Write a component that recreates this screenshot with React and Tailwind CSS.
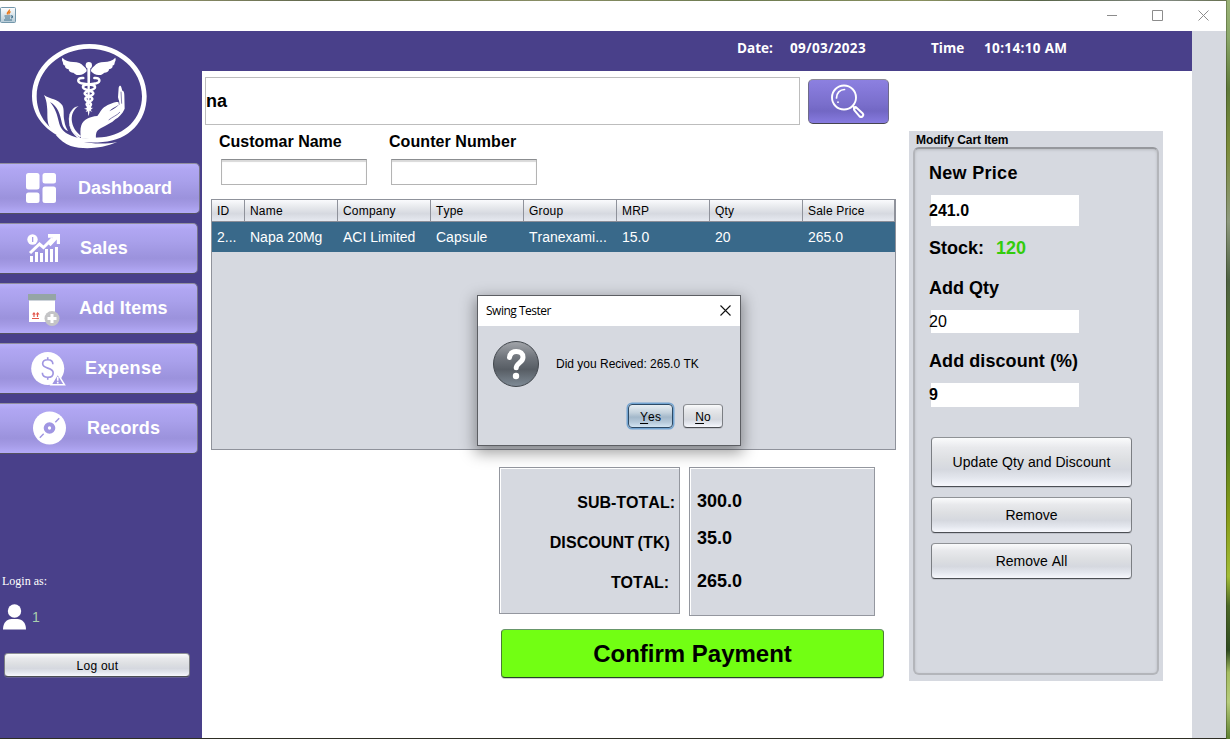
import React from "react";

const grayBtn =
  "flex items-center justify-center rounded-[4px] border border-t-[#8f9296] border-x-[#7b7e83] border-b-[#4c4f54] bg-[linear-gradient(180deg,#fafbfc_0%,#e8e9ec_20%,#dddfe2_45%,#d5d8df_66%,#e4e7ee_84%,#f7f8fd_100%)] shadow-[0_1px_0_rgba(150,153,160,0.35)]";

function Logo() {
  return (
    <svg viewBox="0 6 360 330" className="h-[110px] w-[120px]" fill="#fff">
      <path
        fillRule="evenodd"
        d="M178 12C274 12 350 82 350 169C350 244 296 302 218 306C190 309 160 307 134 304C60 290 6 236 6 169C6 82 83 12 178 12ZM178 26C91 26 20 90 20 169C20 222 50 264 96 286C124 297 152 298 178 294L216 292C286 286 336 234 336 169C336 90 265 26 178 26Z"
      />
      <path d="M92 278C130 305 200 318 262 306C214 326 164 330 122 318C104 312 90 300 78 286Z" />
      <path d="M42 165C60 178 84 176 97 196C104 210 99 226 103 242C105 256 109 264 114 273C104 270 98 260 95 246C90 222 84 200 60 186C77 206 82 226 86 244C90 262 98 274 112 281C128 290 146 294 166 296L160 306C118 304 82 290 62 266C48 246 54 222 51 200C50 184 47 176 42 165Z" />
      <path d="M142 198C122 208 115 224 117 243C119 268 136 286 162 300L150 298C126 284 116 262 117 240C118 218 128 202 142 198Z" />
      <path d="M146 198C128 210 123 228 126 246C130 266 140 278 154 288L150 292C128 280 116 262 117 238C118 216 128 202 146 198Z" />
      <path d="M153 296C151 282 150 268 154 256C160 238 178 230 202 228C210 218 214 208 222 202C236 192 254 186 264 186C272 187 272 191 264 196C254 202 244 206 238 214C250 208 262 200 269 192L264 172L266 143C268 136 272 136 274 142L277 152C281 152 283 158 283 166L284 206C277 222 266 232 256 238C246 248 230 256 212 265C198 272 197 282 198 296Z" />
      <path d="M236 240C248 230 262 226 270 216M265 180L268 194M273 155l2 36" fill="none" stroke="#49408a" strokeWidth="2" />
      <circle cx="176.500" cy="75.500" r="9.500" />
      <path d="M172 82h9l-3 126-2 20-3-20z" />
      <path d="M170 94C164 101 156 105 148 105C138 106 134 101 130 98C121 99 116 93 116 88C108 86 103 81 106 77C98 75 100 70 98 65C95 61 96 57 97 53C105 62 118 66 130 66C144 66 154 70 160 78C166 84 171 86 170 94Z" />
      <path d="M183 94C189 101 197 105 205 105C215 106 219 101 223 98C232 99 237 93 237 88C245 86 250 81 247 77C255 75 253 70 255 65C258 61 257 57 256 53C248 62 235 66 223 66C209 66 199 70 193 78C187 84 182 86 183 94Z" />
      <g fill="none" stroke="#fff" strokeWidth="7.500" strokeLinecap="round">
        <path d="M160 114C142 112 140 127 154 130C176 134 196 132 195 142C194 152 166 151 164 160C164 170 188 168 187 177C186 186 168 186 170 194C172 201 182 199 181 206" />
        <path d="M193 114C211 112 213 127 199 130C177 134 157 132 159 142C161 152 190 151 190 160C189 170 165 168 166 177C167 186 184 186 183 194C182 201 172 199 173 206" />
      </g>
      <path d="M162 206l11-3 5 2 12-2-9 6 6 6-10-3-10 4 4-7zM173 214h6l-3 14z" />
    </svg>
  );
}

function DashboardIcon() {
  return (
    <svg viewBox="0 0 30 30" className="h-[30px] w-[30px]" fill="#fff">
      <rect width="13.500" height="16.500" rx="2.500" />
      <rect x="16.500" width="13.500" height="10.500" rx="2.500" />
      <rect y="19.500" width="13.500" height="10.500" rx="2.500" />
      <rect x="16.500" y="13.500" width="13.500" height="16.500" rx="2.500" />
    </svg>
  );
}

function SalesIcon() {
  return (
    <svg viewBox="0 0 34 30" className="h-[30px] w-[34px]" fill="#fff">
      <circle cx="5.500" cy="6.500" r="5.200" />
      <path d="M5 4h1.300v5h-1.300z" fill="#a49be6" />
      <path d="M3 20L12.500 11l4 3.500L25.500 5.500" fill="none" stroke="#fff" strokeWidth="3" />
      <path d="M21 1h12v10h-3.200V6.500l-6.300 6.800-3-3 5.300-5.500H21z" />
      <path d="M3 23h3v6H3zM8 19h3v10H8zM13 20h3v9h-3zM18 16h3v13h-3zM23 16h3v13h-3zM28 14h3v15h-3z" />
    </svg>
  );
}

function AddItemsIcon() {
  return (
    <svg viewBox="0 0 34 32" className="h-[32px] w-[34px]">
      <path d="M2 6h26v22H2z" fill="#fff" />
      <path d="M1 0h28v6H1z" fill="#95a5a5" />
      <path d="M2 6h26v1H2z" fill="#cdd3da" />
      <path d="M5 24.500h7M7 23v-4M10.500 23v-4" stroke="#e2574c" strokeWidth="1.200" />
      <path d="M5 20.500l2-2.500 1.800 2.500zM8.800 20.500l1.800-2.500 2 2.500z" fill="#e2574c" />
      <circle cx="25" cy="24.500" r="7.500" fill="#c4c4c6" />
      <path d="M25 20v9M20.500 24.500h9" stroke="#fff" strokeWidth="3" />
    </svg>
  );
}

function ExpenseIcon() {
  return (
    <svg viewBox="0 0 36 36" className="h-[36px] w-[36px]">
      <circle cx="17.200" cy="17.500" r="17" fill="#fff" />
      <path
        d="M22.500 13c0-3-2.200-4.500-5.300-4.500-3 0-5.200 1.500-5.200 4.200 0 5.700 10.800 3 10.800 9.300 0 2.900-2.300 4.500-5.500 4.500-3.400 0-5.600-1.800-5.600-4.700M17.200 6v2.500M17.200 26.500v2.500"
        fill="none"
        stroke="#a096e2"
        strokeWidth="1.700"
      />
      <path d="M27.500 23L20.500 34.300h14z" fill="#a096e2" stroke="#fff" strokeWidth="1.500" />
      <path d="M27.500 26v4.200M27.500 31.200v1.800" stroke="#fff" strokeWidth="1.700" />
    </svg>
  );
}

function RecordsIcon() {
  return (
    <svg viewBox="0 0 34 34" className="h-[34px] w-[34px]">
      <circle cx="17" cy="17" r="17" fill="#fff" />
      <circle cx="17" cy="17" r="6" fill="#a096e2" />
      <circle cx="17" cy="17" r="1.700" fill="#fff" />
      <path d="M7 27l4-4M23 11l4-4" stroke="#a096e2" strokeWidth="1.500" />
    </svg>
  );
}

function NavButton({ icon, label, box, iconPad, textPad }) {
  return (
    <button
      className={
        "flex h-[51px] shrink-0 items-center rounded-r-[5px] border border-l-0 border-t-[#918f9f] border-r-[#77748a] border-b-[#55535f] bg-[linear-gradient(180deg,#b8affa_0%,#b0a6f2_12%,#a9a0eb_35%,#9b92dc_70%,#a59be6_84%,#b4abf8_100%)] pb-px " +
        box
      }
    >
      <span className={"flex w-[66px] shrink-0 " + iconPad}>{icon}</span>
      <span className={"text-lg leading-none font-bold text-white " + textPad}>{label}</span>
    </button>
  );
}

function Sidebar() {
  return (
    <aside className="flex w-[202px] shrink-0 flex-col bg-[#49408a]">
      <div className="h-[132px] shrink-0 pt-[11px] pl-[30px]">
        <Logo />
      </div>
      <nav className="flex flex-col gap-[9px]">
        <NavButton icon={<DashboardIcon />} label="Dashboard" box="w-[200px]" iconPad="pl-[26px]" textPad="pl-[12px]" />
        <NavButton icon={<SalesIcon />} label="Sales" box="w-[198px]" iconPad="pl-[27px]" textPad="pl-[14px] tracking-[0.15px]" />
        <NavButton icon={<AddItemsIcon />} label="Add Items" box="w-[198px]" iconPad="pl-[27px] pt-[3px]" textPad="pl-[13px] tracking-[0.2px]" />
        <NavButton icon={<ExpenseIcon />} label="Expense" box="w-[198px]" iconPad="pl-[31px] pt-[2px]" textPad="pl-[19px] tracking-[0.4px]" />
        <NavButton icon={<RecordsIcon />} label="Records" box="w-[198px]" iconPad="pl-[33px]" textPad="pl-[21px] tracking-[0.15px]" />
      </nav>
      <div className="mt-[119px] pl-[2px] font-['Liberation_Serif',serif] text-[12px] leading-[16px] text-white">Login as:</div>
      <div className="mt-[14px] flex h-[27px] items-center gap-[7px] pl-[3px]">
        <svg viewBox="0 0 23 26" className="h-[26px] w-[23px]" fill="#fff">
          <circle cx="11.500" cy="7" r="6.700" />
          <path d="M0 25.500C0 18.500 4 15 8.500 15h6c4.500 0 8.500 3.500 8.500 10.500z" />
        </svg>
        <span className="-ml-px text-[14px] leading-none text-[#a9cfae]">1</span>
      </div>
      <button className={"mt-[23px] ml-[4px] h-[24px] w-[186px] pt-[2px] pl-px text-[12px] tracking-[0.25px] text-black " + grayBtn}>Log out</button>
    </aside>
  );
}

const columns = [
  ["ID", "2...", "w-[33px]"],
  ["Name", "Napa 20Mg", "w-[93px]"],
  ["Company", "ACI Limited", "w-[93px]"],
  ["Type", "Capsule", "w-[93px]"],
  ["Group", "Tranexami...", "w-[93px]"],
  ["MRP", "15.0", "w-[93px]"],
  ["Qty", "20", "w-[93px]"],
  ["Sale Price", "265.0", "w-[92px]"],
];

function CartTable() {
  return (
    <div className="mt-[14px] ml-[9px] h-[251px] w-[685px] border border-[#8f929b] bg-[#d6d9e0]">
      <div className="flex h-[22px] border-b border-[#8b8e98] bg-[linear-gradient(180deg,#fafbfd_0%,#e6e8ec_35%,#d6d9e0_65%,#e6e9f0_100%)]">
        {columns.map(([head, , w]) => (
          <div key={head} className={"flex shrink-0 items-center border-r border-[#8f929b] pl-[5px] text-[12px] leading-none tracking-[0.2px] text-black " + w}>
            {head}
          </div>
        ))}
      </div>
      <div className="flex h-[30px] bg-[#39698a]">
        {columns.map(([head, value, w]) => (
          <div key={head} className={"flex shrink-0 items-center pl-[5px] text-sm leading-none whitespace-nowrap text-white " + w}>
            {value}
          </div>
        ))}
      </div>
    </div>
  );
}

function CheckoutArea() {
  return (
    <section className="flex w-[707px] shrink-0 flex-col">
      <div className="flex gap-[8px] pt-[6px] pl-[3px]">
        <div className="flex h-[48px] w-[595px] items-center border border-[#bdbdbd] bg-white text-lg leading-none font-bold">na</div>
        <button className="mt-[2px] flex h-[45px] w-[81px] justify-center rounded-[5px] border border-t-[#8d8c97] border-x-[#6e6a8a] border-b-[#46444f] bg-[linear-gradient(180deg,#8c80e0_0%,#8478d8_25%,#7a6fcc_55%,#7267c4_72%,#877be0_100%)] pt-[4px] pr-[2px]">
          <svg viewBox="0 0 34 34" className="h-[34px] w-[34px]" fill="none" stroke="#fff" strokeLinecap="round">
            <circle cx="13" cy="13.500" r="12" strokeWidth="1.900" />
            <path d="M5.500 14c0-5 3.500-8.500 8-8.500" strokeWidth="1.700" />
            <path d="M7 18v.2M22 22.500l2 2" strokeWidth="1.700" />
            <path d="M25 23.200l6.500 6c2 2-.7 5-3 3.200L23.500 26.500c-1.200-2 0-3.800 1.500-3.300z" strokeWidth="2" />
          </svg>
        </button>
      </div>
      <div className="mt-[8px] flex pl-[17px]">
        <div className="w-[170px]">
          <div className="h-[18px] text-base leading-[18px] font-bold">Customar Name</div>
          <div className="mt-[8px] ml-[2px] h-[26px] w-[146px] border border-t-[#8b8d90] border-x-[#b4b4b4] border-b-[#b4b4b4] bg-white shadow-[inset_0_2px_1px_#d9d9d9]" />
        </div>
        <div>
          <div className="h-[18px] text-base leading-[18px] font-bold tracking-[0.07px]">Counter Number</div>
          <div className="mt-[8px] ml-[2px] h-[26px] w-[146px] border border-t-[#8b8d90] border-x-[#b4b4b4] border-b-[#b4b4b4] bg-white shadow-[inset_0_2px_1px_#d9d9d9]" />
        </div>
      </div>
      <CartTable />
      <div className="mt-[17px] flex gap-[9px] pl-[297px] font-bold">
        <div className="flex h-[147px] w-[181px] flex-col items-end border border-[#94979f] bg-[#d6d9e0] pt-[25px] text-base leading-[20px] shadow-[inset_1px_1px_0_#fff]">
          <div className="pr-[4px]">SUB-TOTAL:</div>
          <div className="mt-[20px] pr-[9px] tracking-[0.1px]">DISCOUNT<span className="-ml-[1px]"> </span>(TK)</div>
          <div className="mt-[20px] pr-[10px] tracking-[-0.1px]">TOTAL:</div>
        </div>
        <div className="flex h-[149px] w-[186px] flex-col border border-[#94979f] bg-[#d6d9e0] pt-[23px] pl-[7px] text-lg leading-[20px] shadow-[inset_1px_1px_0_#fff]">
          <div>300.0</div>
          <div className="mt-[17px]">35.0</div>
          <div className="mt-[23px]">265.0</div>
        </div>
      </div>
      <button className="mt-[13px] ml-[299px] flex h-[49px] w-[383px] items-center justify-center rounded-[4px] border border-t-[#68966a] border-x-[#4a7c35] border-b-[#25422a] bg-[#72ff13] text-2xl font-bold text-black shadow-[0_1px_0_#d2d2d2]">
        Confirm Payment
      </button>
    </section>
  );
}

function ModifyPanel() {
  return (
    <section className="mt-[60px] flex h-[550px] w-[254px] shrink-0 flex-col bg-[#d6d9e0] px-[4px]">
      <div className="h-[16px] pl-[3px] text-[12px] leading-[18px] font-bold tracking-[-0.1px]">Modify Cart Item</div>
      <div className="flex h-[528px] flex-col rounded-[6px] border-2 border-t-[#96989d] border-x-[#b3b5ba] border-b-[#b3b5ba] pt-[14px] pl-[14px] text-lg leading-[20px] font-bold shadow-[inset_0_1px_3px_#b9bbc0]">
        <div className="tracking-[0.3px]">New Price</div>
        <div className="mt-[12px] ml-[2px] flex h-[31px] w-[148px] items-center bg-white text-base"><span className="-ml-[2px]">241.0</span></div>
        <div className="mt-[12px] flex gap-[12px]"><span>Stock:</span><span className="text-[#33cc0c]">120</span></div>
        <div className="mt-[20px]">Add Qty</div>
        <div className="mt-[12px] ml-[2px] flex h-[23px] w-[148px] items-center bg-white text-base font-normal"><span className="-ml-[2px]">20</span></div>
        <div className="mt-[18px] tracking-[0.07px]">Add discount (%)</div>
        <div className="mt-[12px] ml-[2px] flex h-[24px] w-[148px] items-center bg-white text-base"><span className="-ml-[2px]">9</span></div>
        <div className="mt-[30px] ml-[2px] flex w-[201px] flex-col gap-[10px] text-sm font-normal text-black">
          <button className={"h-[50px] tracking-[0.06px] " + grayBtn}>Update Qty and Discount</button>
          <button className={"h-[36px] " + grayBtn}>Remove</button>
          <button className={"h-[36px] " + grayBtn}>Remove All</button>
        </div>
      </div>
    </section>
  );
}

function ConfirmDialog() {
  return (
    <div className="absolute top-[295px] left-[477px] flex h-[151px] w-[264px] flex-col border border-[#5c5e63] bg-[#d6d9e0] shadow-[0_5px_14px_2px_rgba(0,0,0,0.38)]">
      <div className="flex h-[30px] shrink-0 items-center justify-between bg-white pr-[9px] pl-[8px]">
        <span className="font-['Open_Sans',sans-serif] text-[12px] leading-none tracking-[-0.5px] text-black">Swing Tester</span>
        <svg viewBox="0 0 11 11" className="mb-[2px] h-[11px] w-[11px]" stroke="#111" strokeWidth="1.100"><path d="M.5.5l10 10M10.500.5l-10 10" /></svg>
      </div>
      <div className="flex h-[62px] items-center pt-[14px] pl-[15px]">
        <svg viewBox="0 0 46 46" className="h-[46px] w-[46px]">
          <defs>
            <linearGradient id="question" x1="0" y1="0" x2="0" y2="1">
              <stop offset="0" stopColor="#a3a6ab" />
              <stop offset=".35" stopColor="#70757c" />
              <stop offset=".62" stopColor="#575d64" />
              <stop offset="1" stopColor="#7f8b96" />
            </linearGradient>
          </defs>
          <circle cx="23" cy="23" r="22.500" fill="url(#question)" stroke="#42474d" />
          <path d="M16.500 16.500c.5-4 3-6 6.800-6 4 0 6.700 2.200 6.700 5.700 0 5.500-6.800 5.700-6.800 10.600" fill="none" stroke="#fff" strokeWidth="5" strokeLinecap="round" />
          <circle cx="23" cy="35" r="3.200" fill="#fff" />
        </svg>
        <span className="ml-[17px] text-[12px] leading-none">Did you Recived: 265.0 TK</span>
      </div>
      <div className="flex gap-[10px] pt-[16px] pl-[150px] text-[12px] leading-none">
        <button className="flex h-[24px] w-[45px] items-center justify-center rounded-[4px] border border-[#2d4a66] bg-[linear-gradient(180deg,#e8eef3_0%,#c3d1dc_35%,#a3b8ca_55%,#b5c9da_78%,#d2e4f2_100%)] pt-[2px] shadow-[0_0_0_1.500px_#73a4d1]">
          <span className="tracking-[0.1px]"><span className="underline underline-offset-2">Y</span>es</span>
        </button>
        <button className={"h-[24px] w-[40px] pt-[2px] " + grayBtn}>
          <span className="tracking-[0.2px]"><span className="underline underline-offset-2">N</span>o</span>
        </button>
      </div>
    </div>
  );
}

function TitleBar() {
  return (
    <header className="flex h-[30px] shrink-0 items-center justify-between bg-white pr-[17px] pb-[2px]">
      <svg viewBox="0 0 16 16" className="h-[16px] w-[16px]">
        <defs>
          <linearGradient id="java" x1="0" y1="0" x2="0" y2="1">
            <stop offset="0" stopColor="#fff" />
            <stop offset="1" stopColor="#b5cad6" />
          </linearGradient>
        </defs>
        <rect x=".5" y=".5" width="15" height="15" rx="1" fill="url(#java)" stroke="#7397ab" />
        <path d="M9.500 2.500c.5 1.800-3.500 2.500-2 5M10.500 4.500c-1 .7-2.300 1.500-1.300 3" fill="none" stroke="#e8791c" strokeWidth="1.300" />
        <path d="M4.500 9h6M5 11h5M4 13h8M11 9c2-.5 2 1.500 0 2" fill="none" stroke="#41708c" strokeWidth="1.200" />
      </svg>
      <div className="flex items-center gap-[35px]">
        <svg viewBox="0 0 10 11" className="h-[11px] w-[10px]" stroke="#8c8c8c"><path d="M0 5.500h10" /></svg>
        <svg viewBox="0 0 11 11" className="h-[11px] w-[11px]" fill="none" stroke="#8c8c8c"><path d="M.5.5h10v10h-10z" /></svg>
        <svg viewBox="0 0 11 11" className="h-[11px] w-[11px]" stroke="#8c8c8c"><path d="M.5.5l10 10M10.500.5l-10 10" /></svg>
      </div>
    </header>
  );
}

export default function App() {
  return (
    <div className="relative flex h-[739px] w-[1230px] overflow-hidden bg-[#2e2e24] font-['Liberation_Sans',Arial,sans-serif] text-black [font-kerning:none]">
      <div className="flex w-[1226px] shrink-0 flex-col">
        <div className="h-px shrink-0 bg-[linear-gradient(90deg,#70745a_0%,#8a8c66_15%,#636a4e_25%,#8a8f66_45%,#6c7a50_60%,#8a9160_75%,#59664a_85%,#838a83_95%,#66704f_100%)]" />
        <TitleBar />
        <div className="flex h-[707px]">
          <Sidebar />
          <div className="flex w-[990px] shrink-0 flex-col bg-white">
            <div className="flex h-[40px] shrink-0 items-center bg-[#49408a] pb-[5px] pl-[535px] font-['Open_Sans',sans-serif] text-[13.5px] leading-none font-bold whitespace-nowrap text-white">
              <span className="w-[53px]">Date:</span>
              <span className="w-[141px] tracking-[0.3px]">09/03/2023</span>
              <span className="w-[53px]">Time</span>
              <span className="tracking-[0.35px]">10:14:10 AM</span>
            </div>
            <main className="flex">
              <CheckoutArea />
              <ModifyPanel />
            </main>
          </div>
          <div className="w-[34px] shrink-0 bg-[#d6d9e0]" />
        </div>
      </div>
      <div className="w-[4px] bg-[linear-gradient(180deg,#9bb377_0%,#8ba86a_5%,#5f7a3a_12%,#7c8c3a_20%,#8f9a80_30%,#4f6244_38%,#567a25_50%,#57801f_60%,#899d1a_70%,#a3bd38_78%,#4c6828_82%,#2f4a20_88%,#a5bd62_91%,#b7cc7c_95%,#5d8030_100%)] shadow-[inset_1px_0_0_rgba(40,50,20,0.35)]" />
      <ConfirmDialog />
    </div>
  );
}
